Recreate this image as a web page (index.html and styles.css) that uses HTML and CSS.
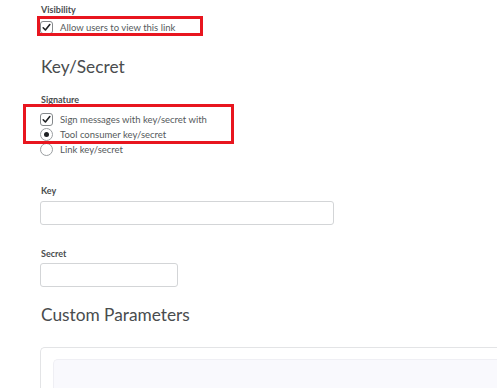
FILE: index.html
```html
<!DOCTYPE html>
<html>
<head>
<meta charset="utf-8">
<title>Link settings</title>
<link rel="stylesheet" href="styles.css">
</head>
<body>
<div class="page">

  <div class="field-label label-visibility">Visibility</div>
  <label class="option option-first">
    <span class="check"><svg viewBox="0 0 13 13" width="13" height="13"><path d="M3.2 6.8 L5.4 9 L9.8 3.6" fill="none" stroke="#1f2123" stroke-width="1.6" stroke-linecap="round" stroke-linejoin="round"/></svg></span>
    Allow users to view this link
  </label>

  <h2 class="section-title title-key">Key/Secret</h2>

  <div class="field-label label-signature">Signature</div>
  <div class="options">
    <label class="option">
      <span class="check"><svg viewBox="0 0 13 13" width="13" height="13"><path d="M3.2 6.8 L5.4 9 L9.8 3.6" fill="none" stroke="#1f2123" stroke-width="1.6" stroke-linecap="round" stroke-linejoin="round"/></svg></span>
      Sign messages with key/secret with
    </label>
    <label class="option">
      <span class="radio checked"></span>
      Tool consumer key/secret
    </label>
    <label class="option">
      <span class="radio"></span>
      Link key/secret
    </label>
  </div>

  <div class="field-label label-key">Key</div>
  <div class="input input-key"></div>

  <div class="field-label label-secret">Secret</div>
  <div class="input input-secret"></div>

  <h2 class="section-title title-custom">Custom Parameters</h2>

  <div class="param-box">
    <div class="param-inner"></div>
  </div>

</div>

<div class="highlight highlight-one"></div>
<div class="highlight highlight-two"></div>
</body>
</html>
```

FILE: styles.css
```css
html, body {
  margin: 0;
  padding: 0;
  background: #ffffff;
  overflow: hidden;
}

body {
  font-family: Lato, "Open Sans", sans-serif;
  color: #494c4e;
  width: 497px;
  height: 388px;
  position: relative;
}

.page {
  padding-left: 40px;
}

.field-label {
  font-size: 9px;
  font-weight: 700;
  line-height: 12px;
  color: #494c4e;
  padding-left: 1px;
}

.label-visibility { padding-top: 4px; }
.label-signature { margin-top: 16px; }
.label-key { margin-top: 28px; }
.label-secret { margin-top: 23px; }

.option {
  display: flex;
  align-items: center;
  gap: 7px;
  height: 15px;
  font-size: 9.5px;
  color: #565a5c;
}

.option-first {
  margin-top: 4px;
}

.options {
  margin-top: 6px;
}

.check {
  width: 13px;
  height: 13px;
  box-sizing: border-box;
  border: 1px solid #85898c;
  border-radius: 3px;
  display: flex;
  align-items: center;
  justify-content: center;
  flex: none;
}

.check svg {
  display: block;
  flex: none;
}

.radio {
  width: 13px;
  height: 13px;
  box-sizing: border-box;
  border: 1px solid #9a9ea1;
  border-radius: 50%;
  flex: none;
  display: flex;
  align-items: center;
  justify-content: center;
}

.radio.checked::after {
  content: "";
  width: 5px;
  height: 5px;
  border-radius: 50%;
  background: #1f2123;
}

.section-title {
  margin: 0;
  font-size: 17.3px;
  font-weight: 400;
  line-height: 22px;
  color: #494c4e;
  padding-left: 1px;
}

.title-key { margin-top: 21px; }
.title-custom { margin-top: 17px; }

.input {
  box-sizing: border-box;
  height: 24px;
  border: 1px solid #d3d5d7;
  border-radius: 3px;
  background: #ffffff;
}

.input-key {
  width: 294px;
  margin-top: 4px;
}

.input-secret {
  width: 138px;
  margin-top: 3px;
}

.param-box {
  margin-top: 21px;
  box-sizing: border-box;
  height: 41px;
  border: 1px solid #e3e4e6;
  border-bottom: none;
  border-right: none;
  border-radius: 5px 0 0 0;
  padding: 11px 0 0 12px;
  overflow: hidden;
}

.param-inner {
  height: 30px;
  background: #f9f9fd;
  border: 1px solid #efeff4;
  border-bottom: none;
  border-right: none;
  border-radius: 5px 0 0 0;
}

.highlight {
  position: absolute;
  box-sizing: border-box;
  border: 3px solid #e8161f;
}

.highlight-one {
  left: 37px;
  top: 16px;
  width: 166px;
  height: 20px;
}

.highlight-two {
  left: 23px;
  top: 104px;
  width: 211px;
  height: 40px;
}
```
